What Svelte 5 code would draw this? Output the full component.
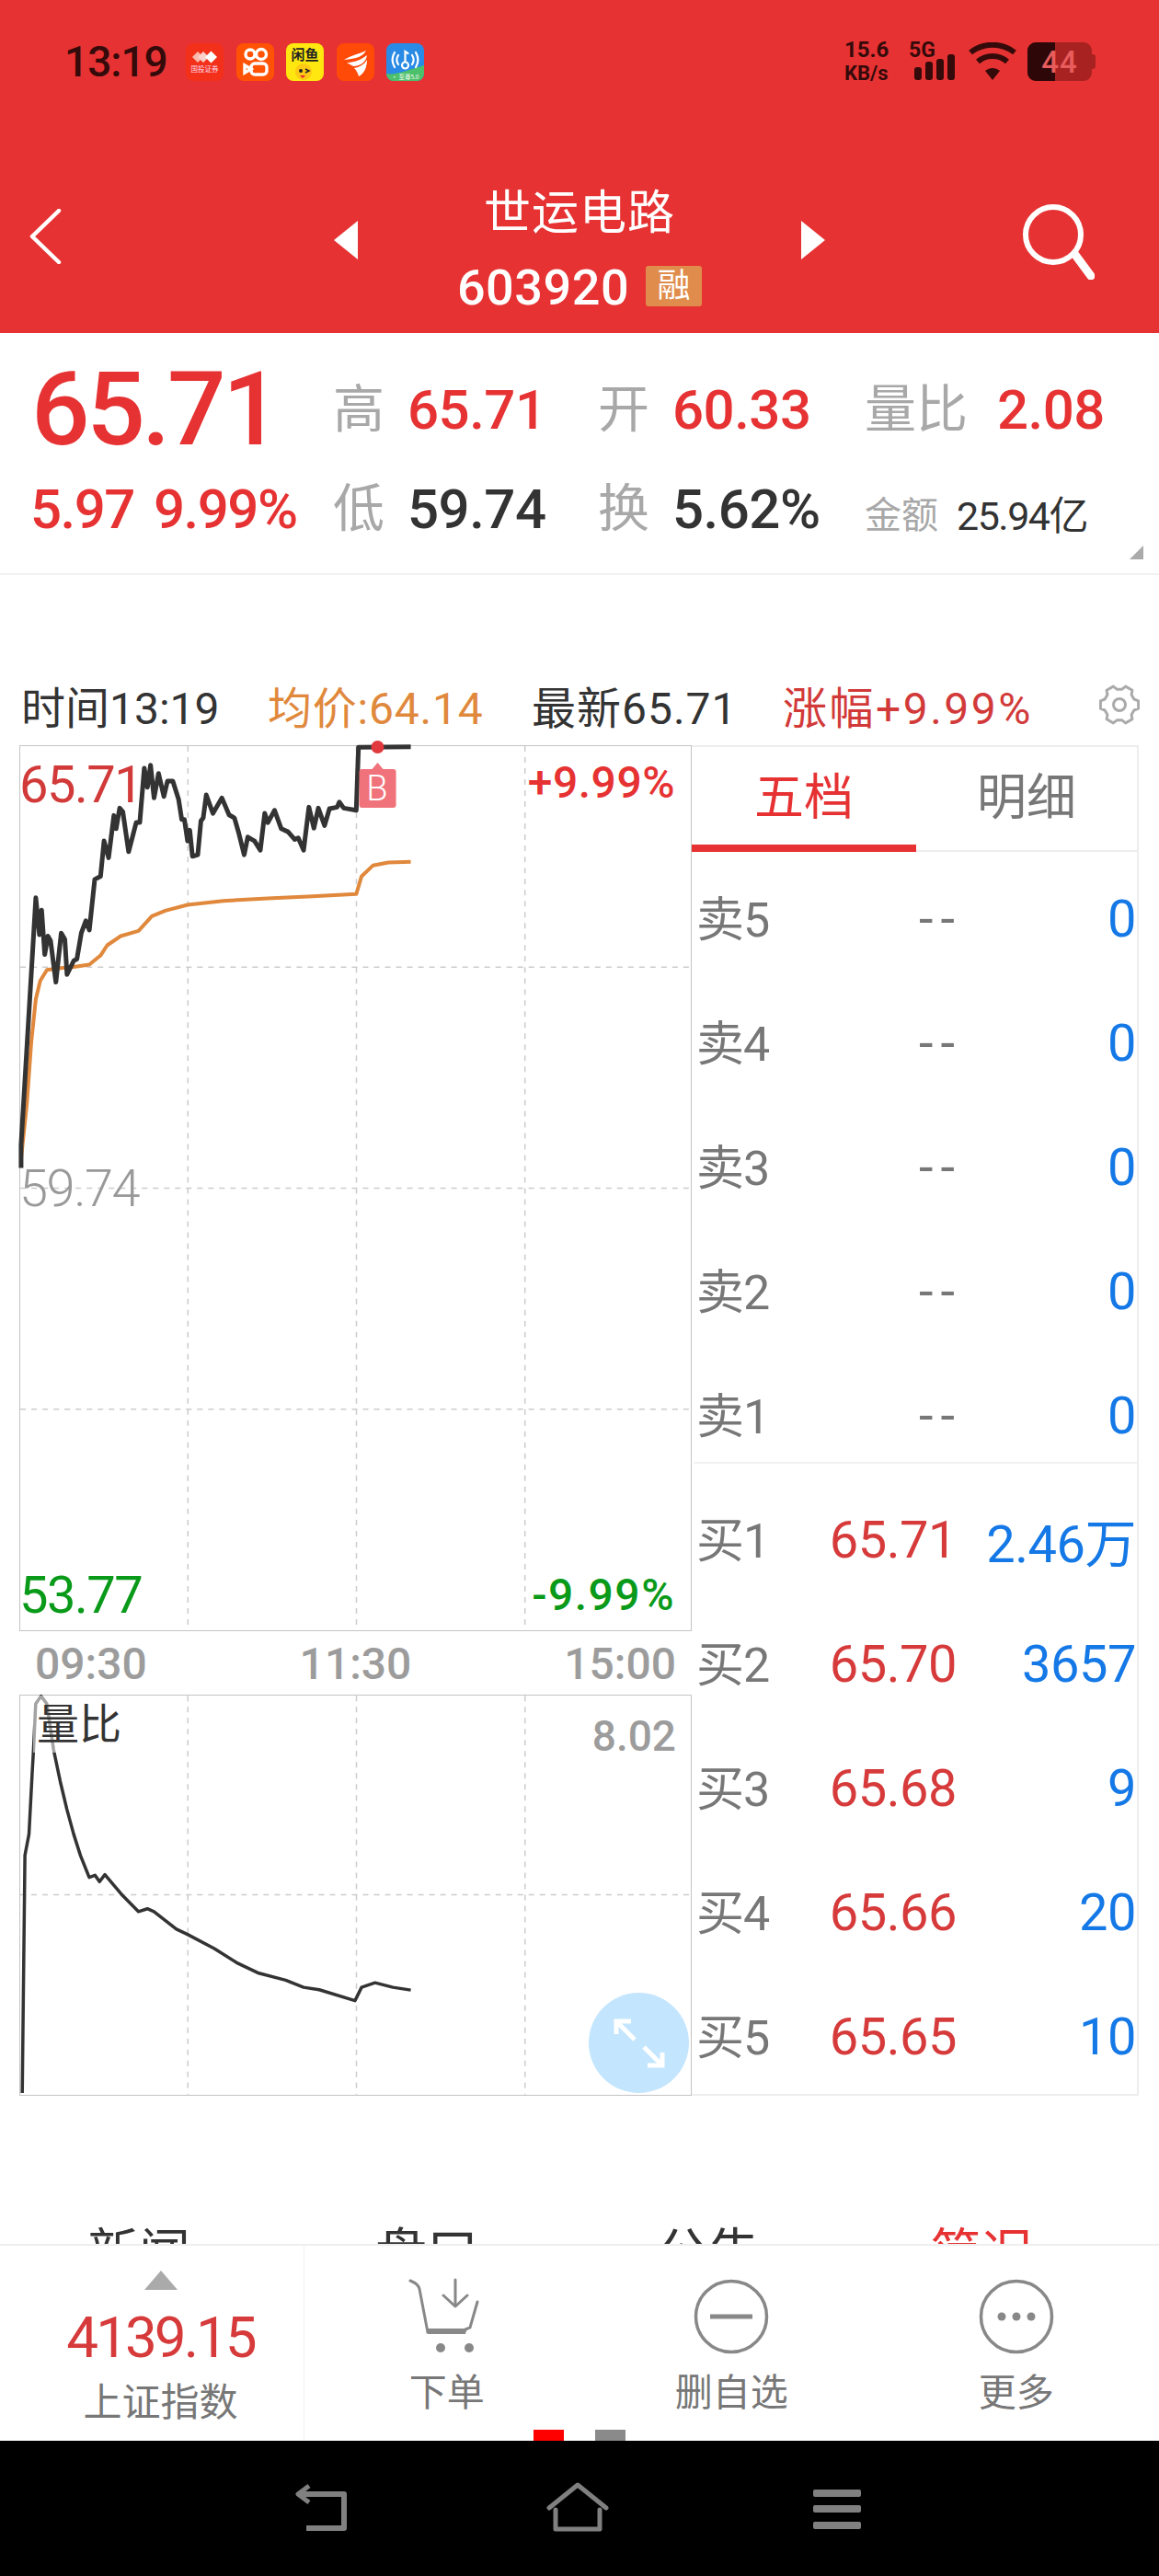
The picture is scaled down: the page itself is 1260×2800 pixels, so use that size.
<script>
  // traced from the reference, stored as full-page pixel coordinates
  const priceRaw = [[47,1410],[47,1335],[80,530],[88,650],[93,570],[100,715],[107,655],[113,670],[125,805],[137,645],[145,665],[150,780],[165,735],[172,730],[182,645],[192,605],[200,635],[212,470],[225,460],[233,345],[243,400],[255,262],[260,305],[268,238],[275,250],[288,380],[305,285],[313,285],[323,108],[330,170],[337,98],[345,205],[355,125],[367,200],[375,150],[387,150],[400,210],[407,275],[413,275],[420,345],[425,310],[431,395],[443,390],[450,280],[455,270],[462,195],[477,255],[497,205],[513,260],[525,270],[535,320],[547,390],[555,332],[570,345],[583,375],[593,255],[600,285],[615,245],[630,305],[645,315],[660,340],[668,335],[680,375],[692,235],[703,303],[713,238],[727,295],[738,240],[755,235],[760,218],[770,238],[798,245],[803,40],[920,38]];
  const avgRaw = [[47,1380],[60,1200],[70,1000],[80,860],[90,800],[105,765],[130,760],[165,755],[200,748],[225,718],[240,685],[270,655],[310,638],[340,590],[370,572],[420,553],[500,540],[600,532],[700,525],[798,518],[810,460],[835,425],[870,415],[920,413]];
  const ratioRaw = [[50,1505],[56,830],[65,770],[72,600],[75,530],[80,400],[92,378],[105,400],[120,530],[135,620],[150,700],[165,770],[180,830],[200,893],[213,887],[223,905],[235,885],[255,915],[275,945],[310,990],[330,982],[345,990],[395,1040],[420,1055],[480,1095],[530,1135],[580,1165],[640,1185],[680,1205],[715,1212],[795,1243],[810,1205],[840,1192],[880,1205],[920,1213]];

  const toPoints = (raw, ox, oy, sy, top) =>
    raw.map(([x, y]) => `${(x / 2.063 - ox).toFixed(1)},${(oy + y / sy - top).toFixed(1)}`).join(" ");

  const pricePts = toPoints(priceRaw, 22, 800, 3, 812);
  const avgPts = toPoints(avgRaw, 22, 800, 3, 812);
  const ratioPts = toPoints(ratioRaw, 22, 1700, 2.617, 1844);

  const vGrid = [182, 365, 548];

  // six lobed settings wheel
  const gearPts = [];
  for (let i = 0; i < 6; i++) {
    const a = (i * Math.PI) / 3;
    [[-0.36, 17], [-0.2, 21], [0.2, 21], [0.36, 17]].forEach(([d, r]) => {
      gearPts.push(`${(22 + r * Math.cos(a + d)).toFixed(1)},${(22 + r * Math.sin(a + d)).toFixed(1)}`);
    });
  }
  const gearPath = gearPts.join(" ");

  const sells = [5, 4, 3, 2, 1].map((n) => ({ label: "卖" + n, price: "--", vol: "0", empty: true }));
  const buys = [
    { label: "买1", price: "65.71", vol: "2.46万" },
    { label: "买2", price: "65.70", vol: "3657" },
    { label: "买3", price: "65.68", vol: "9" },
    { label: "买4", price: "65.66", vol: "20" },
    { label: "买5", price: "65.65", vol: "10" },
  ];
  const rows = [...sells, ...buys];
</script>

<div class="page">
  <header class="header">
    <div class="status">
      <span class="time">13:19</span>
      <div class="apps">
        <svg class="app" viewBox="0 0 41 41">
          <rect width="41" height="41" rx="8" fill="#f3301a" />
          <path d="M7 15l6-6 6 6-6 6z" fill="#f9b9ad" />
          <path d="M13 15l6-6 6 6-6 6z" fill="#fbd2ca" />
          <path d="M21 15l6.500-6.500 6.500 6.500-6.500 6.500z" fill="#fff" />
          <text x="20.500" y="31" text-anchor="middle" class="app-tiny">国投证券</text>
        </svg>
        <svg class="app" viewBox="0 0 41 41">
          <rect width="41" height="41" rx="8" fill="#ff5205" />
          <g fill="none" stroke="#fff" stroke-width="3.400">
            <circle cx="15" cy="12" r="5" />
            <circle cx="27" cy="12" r="5.500" />
            <rect x="16" y="22" width="17" height="12" rx="4" />
            <path d="M16 28l-7-4v8z" />
          </g>
        </svg>
        <svg class="app" viewBox="0 0 41 41">
          <rect width="41" height="41" rx="8" fill="#ffe70f" />
          <text x="20.500" y="18" text-anchor="middle" class="app-fish">闲鱼</text>
          <circle cx="19" cy="31" r="9" fill="#ffc915" />
          <circle cx="16" cy="30" r="2" fill="#222" />
          <path d="M21 28l4 2-4 2" stroke="#222" stroke-width="1.500" fill="none" />
          <path d="M15 35l3 3 3-3z" fill="#e23" />
        </svg>
        <svg class="app" viewBox="0 0 41 41">
          <rect width="41" height="41" rx="8" fill="#ff4a08" />
          <path d="M8 18C16 13 26 11 32 8 29 14 22 17 8 18z" fill="#fff" />
          <path d="M11 21c7 0 14-2 22-8-1 8-8 12-15 12z" fill="#fff" />
          <path d="M19 27c6-1 11-4 14-9 0 8-3 15-9 18-1-4-3-7-5-9z" fill="#fff" />
        </svg>
        <svg class="app" viewBox="0 0 41 41">
          <rect width="41" height="41" rx="8" fill="#2a8be6" />
          <path d="M0 33c10 2 25-4 41-9v9a8 8 0 0 1-8 8H8a8 8 0 0 1-8-8z" fill="#4cc06a" />
          <g fill="none" stroke="#fff" stroke-width="2.200" stroke-linecap="round">
            <path d="M9 10c-3 5-3 11 0 16" />
            <path d="M13 13c-2 3-2 7 0 10" />
            <path d="M32 10c3 5 3 11 0 16" />
            <path d="M28 13c2 3 2 7 0 10" />
            <circle cx="20.500" cy="24" r="3.500" />
            <path d="M20.500 20V9l3 2" />
          </g>
          <text x="20.500" y="38.500" text-anchor="middle" class="app-tiny small">· 至尊5.0</text>
        </svg>
      </div>
      <div class="sys">
        <div class="speed">
          <span>15.6</span>
          <span class="unit">KB/s</span>
        </div>
        <svg class="signal" width="50" height="42" viewBox="0 0 50 42">
          <text x="-2" y="16" class="fiveg">5G</text>
          <rect x="4" y="27" width="8" height="14" rx="3" />
          <rect x="16" y="21" width="8" height="20" rx="3" />
          <rect x="28" y="18" width="8" height="23" rx="3" />
          <rect x="40" y="13" width="8" height="28" rx="3" />
        </svg>
        <svg class="wifi" width="52" height="42" viewBox="0 0 52 42">
          <path d="M2 11C16 0 36 0 50 11" />
          <path d="M10 21C19 13 33 13 42 21" />
          <path d="M18 31l8 10 8-10c-5-4-11-4-16 0z" class="wedge" />
        </svg>
        <div class="battery">
          <span class="battery-fill"></span>
          <span class="battery-num">44</span>
          <span class="battery-cap"></span>
        </div>
      </div>
    </div>

    <div class="nav">
      <div class="nav-left">
        <svg width="36" height="60" viewBox="0 0 36 60">
          <path d="M33 2L4 30l29 28" fill="none" stroke="#fff" stroke-width="4.500" stroke-linecap="round" stroke-linejoin="round" />
        </svg>
      </div>
      <div class="nav-center">
        <svg class="tri" width="26" height="42" viewBox="0 0 26 42"><path d="M26 0v42L0 21z" fill="#fff" /></svg>
        <div class="stock">
          <div class="stock-name">世运电路</div>
          <div class="stock-code">
            <span>603920</span>
            <span class="badge">融</span>
          </div>
        </div>
        <svg class="tri" width="26" height="42" viewBox="0 0 26 42"><path d="M0 0v42l26-21z" fill="#fff" /></svg>
      </div>
      <div class="nav-right">
        <svg width="80" height="82" viewBox="0 0 80 82">
          <circle cx="35" cy="33" r="30" fill="none" stroke="#fff" stroke-width="6" />
          <path d="M59 55l17 23" stroke="#fff" stroke-width="9" stroke-linecap="round" />
        </svg>
      </div>
    </div>
  </header>

  <section class="quote">
    <div class="q-main">65.71</div>
    <div class="q-cell"><span class="q-label">高</span><span class="q-val red">65.71</span></div>
    <div class="q-cell"><span class="q-label">开</span><span class="q-val red">60.33</span></div>
    <div class="q-cell wide"><span class="q-label">量比</span><span class="q-val red">2.08</span></div>
    <div class="q-change"><span>5.97</span><span>9.99%</span></div>
    <div class="q-cell"><span class="q-label">低</span><span class="q-val">59.74</span></div>
    <div class="q-cell"><span class="q-label">换</span><span class="q-val">5.62%</span></div>
    <div class="q-cell low"><span class="q-small">金额</span><span class="q-amount">25.94亿</span></div>
    <span class="corner"></span>
  </section>

  <div class="info">
    <span class="i-time">时间13:19</span>
    <span class="i-avg">均价:64.14</span>
    <span class="i-last">最新65.71</span>
    <span class="i-rise">涨幅+9.99%</span>
    <svg class="gear" width="44" height="44" viewBox="0 0 44 44">
      <polygon points={gearPath} fill="none" stroke="#aaa" stroke-width="3" stroke-linejoin="round" />
      <circle cx="22" cy="22" r="6.500" fill="none" stroke="#aaa" stroke-width="3" />
    </svg>
  </div>

  <div class="main">
    <div class="charts">
      <div class="chart price-chart">
        <svg class="plot" viewBox="0 0 728 960">
          {#each vGrid as x}
            <line x1={x} x2={x} y1="0" y2="960" class="grid" />
          {/each}
          {#each [240, 480, 720] as y}
            <line x1="0" x2="728" y1={y} y2={y} class="grid" />
          {/each}
          <polyline points={avgPts} class="avg" />
          <polyline points={pricePts} class="price" />
          <circle cx="388" cy="1" r="7" fill="#e03a3e" />
          <path d="M368 28a3 3 0 0 1 3-3h11l6-7 6 7h11a3 3 0 0 1 3 3v36a3 3 0 0 1-3 3h-34a3 3 0 0 1-3-3z" fill="#f0727a" />
        </svg>
        <span class="b-mark">B</span>
        <span class="axis-l top">65.71</span>
        <span class="axis-r top">+9.99%</span>
        <span class="axis-l mid">59.74</span>
        <span class="axis-l bottom">53.77</span>
        <span class="axis-r bottom">-9.99%</span>
      </div>

      <div class="times">
        <span>09:30</span>
        <span>11:30</span>
        <span>15:00</span>
      </div>

      <div class="chart ratio-chart">
        <svg class="plot" viewBox="0 0 728 433">
          {#each vGrid as x}
            <line x1={x} x2={x} y1="0" y2="433" class="grid" />
          {/each}
          <line x1="0" x2="728" y1="216" y2="216" class="grid" />
          <polyline points={ratioPts} class="ratio" />
        </svg>
        <span class="ratio-label">量比</span>
        <span class="ratio-max">8.02</span>
        <div class="expand">
          <svg width="56" height="54" viewBox="0 0 56 54">
            <g fill="none" stroke="#fff" stroke-width="5">
              <path d="M3 17V3h16" />
              <path d="M3 3l20 20" />
              <path d="M53 37v14H37" />
              <path d="M53 51L33 31" />
            </g>
          </svg>
        </div>
      </div>
    </div>

    <aside class="book">
      <div class="tabs">
        <span class="tab active">五档</span>
        <span class="tab">明细</span>
      </div>
      <div class="rows">
        {#each rows as r}
          <div class="row">
            <span class="r-label">{r.label}</span>
            <span class="r-price" class:dash={r.empty}>{r.price}</span>
            <span class="r-vol">{r.vol}</span>
          </div>
        {/each}
        <span class="sep"></span>
      </div>
    </aside>
  </div>

  <div class="news-tabs">
    <span>新闻</span>
    <span>盘口</span>
    <span>公告</span>
    <span class="on">简况</span>
  </div>

  <footer class="toolbar">
    <div class="index">
      <span class="index-up"></span>
      <span class="index-val">4139.15</span>
      <span class="index-name">上证指数</span>
    </div>
    <div class="actions">
      <div class="action">
        <svg class="cart" width="90" height="84" viewBox="0 0 90 84">
          <g fill="none" stroke="#888" stroke-width="3">
            <path d="M2 3c5 2 9 4 10 9l9 47h40l1-3 5-2 8-28" stroke-linecap="round" />
            <path d="M21 58h41" stroke-width="6" />
            <path d="M51 2v28" stroke-linecap="round" />
            <path d="M38 19l13 12 13-12" stroke-linecap="round" stroke-linejoin="round" />
          </g>
          <circle cx="35" cy="76" r="5" fill="#888" />
          <circle cx="66" cy="76" r="5" fill="#888" />
        </svg>
        <span>下单</span>
      </div>
      <div class="action">
        <svg width="84" height="84" viewBox="0 0 84 84">
          <circle cx="42" cy="42" r="38.500" fill="none" stroke="#888" stroke-width="3.500" />
          <path d="M19 42h46" stroke="#888" stroke-width="5" />
        </svg>
        <span>删自选</span>
      </div>
      <div class="action">
        <svg width="84" height="84" viewBox="0 0 84 84">
          <circle cx="42" cy="42" r="38.500" fill="none" stroke="#888" stroke-width="3.500" />
          <circle cx="26" cy="42" r="4.500" fill="#888" />
          <circle cx="42" cy="42" r="4.500" fill="#888" />
          <circle cx="58" cy="42" r="4.500" fill="#888" />
        </svg>
        <span>更多</span>
      </div>
    </div>
    <div class="pager">
      <span class="dot on"></span>
      <span class="dot"></span>
    </div>
  </footer>

  <nav class="sysnav">
    <svg width="60" height="54" viewBox="0 0 60 54">
      <g fill="none" stroke="#808080" stroke-width="6" stroke-linejoin="round">
        <path d="M6 13h49v37H14" />
        <path d="M17 4L5 13l12 9" stroke-width="5" />
      </g>
    </svg>
    <svg width="68" height="54" viewBox="0 0 68 54">
      <g fill="none" stroke="#808080" stroke-width="5" stroke-linejoin="round" stroke-linecap="round">
        <path d="M3 28L34 3l31 25" />
        <path d="M10 30v21h48V30" />
      </g>
    </svg>
    <svg width="54" height="44" viewBox="0 0 54 44">
      <rect x="1" y="0" width="52" height="8" rx="2" fill="#808080" />
      <rect x="1" y="17" width="52" height="8" rx="2" fill="#808080" />
      <rect x="1" y="35" width="52" height="8" rx="2" fill="#808080" />
    </svg>
  </nav>
</div>

<style>
  :global(body) {
    margin: 0;
    background: #fff;
  }

  .page {
    width: 1260px;
    height: 2800px;
    overflow: hidden;
    display: flex;
    flex-direction: column;
    background: #fff;
    color: #333;
    font-family: Roboto, "Noto Sans CJK SC", sans-serif;
  }

  /* header */
  .header {
    height: 362px;
    flex: none;
    background: #e63232;
    box-sizing: border-box;
    padding-top: 46px;
  }

  .status {
    height: 42px;
    display: flex;
    align-items: center;
    padding-left: 70px;
    color: #350a0a;
  }

  .time {
    font-size: 46px;
    font-weight: 500;
    width: 132px;
    letter-spacing: -1px;
  }

  .apps {
    display: flex;
    gap: 13.5px;
  }

  .app {
    width: 41px;
    height: 41px;
  }

  .app-tiny {
    font-size: 7.5px;
    fill: #fde;
    font-family: "Noto Sans CJK SC", sans-serif;
  }

  .app-tiny.small {
    font-size: 6.5px;
    fill: #fff;
  }

  .app-fish {
    font-size: 15px;
    font-weight: 700;
    fill: #222;
    font-family: "Noto Sans CJK SC", sans-serif;
  }

  .sys {
    margin-left: auto;
    display: flex;
    align-items: center;
    padding-right: 73px;
  }

  .speed {
    width: 68px;
    display: flex;
    flex-direction: column;
    font-size: 24px;
    font-weight: 700;
    line-height: 25px;
  }

  .speed .unit {
    font-size: 22px;
  }

  .signal {
    fill: #350a0a;
    margin-right: 13px;
    margin-left: 4px;
    overflow: visible;
  }

  .fiveg {
    font-size: 23px;
    font-weight: 700;
    font-family: Roboto, sans-serif;
  }

  .wifi {
    margin-right: 12px;
  }

  .wifi path {
    fill: none;
    stroke: #350a0a;
    stroke-width: 6;
  }

  .wifi .wedge {
    fill: #350a0a;
    stroke: none;
  }

  .battery {
    position: relative;
    width: 70px;
    height: 42px;
    border-radius: 9px;
    background: #a82222;
    display: flex;
    align-items: center;
    justify-content: center;
  }

  .battery-fill {
    position: absolute;
    left: 0;
    top: 0;
    bottom: 0;
    width: 30px;
    border-radius: 9px 0 0 9px;
    background: #2e0808;
  }

  .battery-num {
    position: relative;
    font-size: 33px;
    font-weight: 500;
    letter-spacing: 1px;
    color: #e85c5c;
  }

  .battery-cap {
    position: absolute;
    right: -4px;
    top: 13px;
    width: 4px;
    height: 16px;
    border-radius: 0 3px 3px 0;
    background: #a82222;
  }

  .nav {
    display: grid;
    grid-template-columns: 1fr 534px 1fr;
    margin-top: 113px;
  }

  .nav-left {
    padding: 26px 0 0 31px;
  }

  .nav-center {
    display: flex;
    justify-content: space-between;
    align-items: flex-start;
  }

  .tri {
    margin-top: 39px;
  }

  .stock {
    text-align: center;
    color: #fff;
  }

  .stock-name {
    font-size: 51px;
    line-height: 62px;
    letter-spacing: 1px;
  }

  .stock-code {
    margin-top: 14px;
    height: 70px;
    display: flex;
    align-items: center;
    gap: 18px;
    font-size: 54px;
    font-weight: 500;
    letter-spacing: 0.5px;
  }

  .badge {
    width: 61px;
    height: 44px;
    margin-top: -3px;
    border-radius: 3px;
    background: #e08c4c;
    font-size: 36px;
    line-height: 44px;
    font-weight: 400;
    text-align: center;
    letter-spacing: 0;
  }

  .nav-right {
    display: flex;
    justify-content: flex-end;
    padding: 21px 70px 0 0;
  }

  /* quote */
  .quote {
    position: relative;
    height: 263px;
    flex: none;
    box-sizing: border-box;
    padding: 29px 0 0 36px;
    border-bottom: 2px solid #f2f2f2;
    display: grid;
    grid-template-columns: 326px 288px 290px 1fr;
    grid-auto-rows: 108px;
  }

  .q-main {
    font-size: 112px;
    font-weight: 500;
    color: #e63232;
    letter-spacing: -3.5px;
    line-height: 108px;
    margin-left: -2px;
  }

  .q-cell {
    display: flex;
    align-items: center;
    gap: 25px;
  }

  .q-cell.wide {
    gap: 32px;
  }

  .q-label {
    font-size: 56px;
    color: #a8a8a8;
    line-height: 1;
  }

  .q-val {
    font-size: 60px;
    font-weight: 500;
    letter-spacing: -0.5px;
    color: #333;
  }

  .red {
    color: #e63232;
  }

  .q-change {
    display: flex;
    align-items: center;
    gap: 21px;
    margin-left: -3px;
    font-size: 60px;
    font-weight: 500;
    color: #e63232;
    letter-spacing: -1.5px;
  }

  .q-cell.low {
    padding-top: 8px;
    box-sizing: border-box;
    gap: 20px;
  }

  .q-small {
    font-size: 40px;
    color: #a8a8a8;
  }

  .q-amount {
    font-size: 43px;
    letter-spacing: -1.5px;
    color: #333;
  }

  .corner {
    position: absolute;
    right: 17px;
    bottom: 15px;
    width: 0;
    height: 0;
    border-left: 15px solid transparent;
    border-bottom: 15px solid #aaa;
  }

  /* info row */
  .info {
    height: 86px;
    margin-top: 99px;
    flex: none;
    box-sizing: border-box;
    padding: 0 0 2px 23px;
    display: flex;
    align-items: center;
    font-size: 48px;
  }

  .i-time {
    width: 268px;
  }

  .i-avg {
    width: 287px;
    color: #e0883c;
    letter-spacing: 0.8px;
  }

  .i-last {
    width: 273px;
    letter-spacing: 1px;
  }

  .i-rise {
    color: #d23a3a;
    letter-spacing: 2.5px;
  }

  .gear {
    margin-left: auto;
    margin-right: 21px;
  }

  /* charts */
  .main {
    display: flex;
    flex: none;
    height: 1468px;
  }

  .charts {
    width: 752px;
    flex: none;
    padding-left: 21px;
    box-sizing: border-box;
  }

  .chart {
    position: relative;
    width: 731px;
    box-sizing: border-box;
    border: 1.5px solid #c4c4c4;
  }

  .price-chart {
    height: 963px;
  }

  .ratio-chart {
    height: 436px;
  }

  .plot {
    position: absolute;
    inset: 0;
    width: 100%;
    height: 100%;
    overflow: visible;
  }

  .grid {
    stroke: #ccc;
    stroke-width: 1.5;
    stroke-dasharray: 6 6;
  }

  .price {
    fill: none;
    stroke: #333;
    stroke-width: 5;
    stroke-linejoin: round;
  }

  .avg {
    fill: none;
    stroke: #e0883c;
    stroke-width: 4;
    stroke-linejoin: round;
  }

  .ratio {
    fill: none;
    stroke: #333;
    stroke-width: 3.5;
    stroke-linejoin: round;
  }

  .b-mark {
    position: absolute;
    left: 369px;
    top: 22px;
    width: 38px;
    text-align: center;
    font-size: 38px;
    line-height: 48px;
    font-weight: 300;
    color: #fff;
  }

  .axis-l,
  .axis-r {
    position: absolute;
    font-size: 56px;
    line-height: 60px;
    letter-spacing: -1.5px;
  }

  .axis-l {
    left: -1px;
    font-weight: 300;
  }

  .axis-r {
    right: 17px;
    font-size: 48px;
    letter-spacing: 0.5px;
    font-weight: 500;
  }

  .axis-l.top {
    top: 12px;
    color: #d23a3a;
    font-weight: 400;
  }

  .axis-r.top {
    top: 10px;
    color: #e63232;
  }

  .axis-l.mid {
    top: 451px;
    color: #999;
  }

  .axis-l.bottom {
    bottom: 8px;
    color: #0a9a1a;
    font-weight: 400;
  }

  .axis-r.bottom {
    bottom: 8px;
    color: #0a9a1a;
    letter-spacing: 1.5px;
  }

  .times {
    height: 69px;
    display: flex;
    justify-content: space-between;
    align-items: center;
    padding: 2px 17px 0 17px;
    font-size: 48px;
    font-weight: 500;
    color: #9c9c9c;
    width: 731px;
    box-sizing: border-box;
  }

  .ratio-label {
    position: absolute;
    left: 14px;
    top: 0;
    padding: 0 4px;
    font-size: 46px;
    line-height: 62px;
    color: #333;
    background: rgba(255, 255, 255, 0.55);
  }

  .ratio-max {
    position: absolute;
    right: 16px;
    top: 16px;
    font-size: 46px;
    line-height: 56px;
    font-weight: 500;
    color: #9c9c9c;
  }

  .expand {
    position: absolute;
    left: 618px;
    top: 323px;
    width: 109px;
    height: 109px;
    border-radius: 50%;
    background: #c3e5fd;
    display: flex;
    align-items: center;
    justify-content: center;
  }

  /* order book */
  .book {
    width: 486px;
    height: 1468px;
    box-sizing: border-box;
    border: solid #ededed;
    border-width: 2px 2px 2px 0;
  }

  .tabs {
    display: grid;
    grid-template-columns: 244px 1fr;
    height: 114px;
    box-sizing: border-box;
    border-bottom: 2px solid #ededed;
  }

  .tab {
    font-size: 54px;
    line-height: 112px;
    text-align: center;
    color: #777;
  }

  .tab.active {
    height: 114px;
    box-sizing: border-box;
    color: #e63232;
    border-bottom: 8px solid #e63232;
  }

  .rows {
    position: relative;
    padding-top: 5px;
  }

  .row {
    height: 135px;
    display: grid;
    grid-template-columns: 115px 168px 1fr;
    align-items: center;
    padding: 0 1px 0 5px;
  }

  .r-label {
    font-size: 52px;
    color: #777;
    letter-spacing: -1px;
    margin-top: -6px;
  }

  .r-price {
    font-size: 56px;
    color: #d63a3a;
    text-align: right;
    letter-spacing: -0.5px;
  }

  .r-price.dash {
    color: #777;
    letter-spacing: 8px;
    margin-right: -6px;
  }

  .r-vol {
    font-size: 56px;
    color: #1478e6;
    text-align: right;
    letter-spacing: -0.5px;
  }

  .sep {
    position: absolute;
    left: 2px;
    right: 0;
    top: 663px;
    height: 2px;
    background: #f2f2f2;
  }

  /* bottom tabs, cut off by the toolbar */
  .news-tabs {
    height: 161px;
    flex: none;
    overflow: hidden;
    box-sizing: border-box;
    padding: 137px 0 0 95px;
    display: grid;
    grid-template-columns: 313px 306px 297px 1fr;
    font-size: 56px;
    line-height: 68px;
    color: #333;
  }

  .news-tabs .on {
    color: #e63232;
  }

  /* toolbar */
  .toolbar {
    position: relative;
    height: 214px;
    flex: none;
    box-sizing: border-box;
    border-top: 2px solid #eee;
    display: flex;
    background: #fff;
  }

  .index {
    width: 331px;
    box-sizing: border-box;
    border-right: 1px solid #f0f0f0;
    display: flex;
    flex-direction: column;
    align-items: center;
    padding: 27px 0 0 19px;
  }

  .index-up {
    width: 0;
    height: 0;
    border: solid transparent;
    border-width: 0 18px 21px;
    border-bottom-color: #aaa;
  }

  .index-val {
    margin-top: 17px;
    font-size: 62px;
    line-height: 70px;
    color: #d63a3a;
    letter-spacing: -3px;
  }

  .index-name {
    margin-top: 8px;
    font-size: 42px;
    line-height: 56px;
    color: #777;
  }

  .actions {
    display: grid;
    grid-template-columns: repeat(3, 309.5px);
  }

  .action {
    display: flex;
    flex-direction: column;
    align-items: center;
    padding-top: 35px;
    font-size: 41px;
    line-height: 50px;
    color: #777;
  }

  .action span {
    margin-top: 16px;
  }

  .cart {
    margin-left: 6px;
  }

  .pager {
    position: absolute;
    left: 580px;
    bottom: 0;
    display: flex;
    gap: 34px;
  }

  .dot {
    width: 33px;
    height: 12px;
    background: #8a8a8a;
  }

  .dot.on {
    background: #f00;
  }

  .sysnav {
    flex: 1;
    background: #000;
    display: flex;
    justify-content: center;
    box-sizing: border-box;
    padding: 45px 0 0 14px;
  }

  .sysnav svg:nth-child(1) {
    margin-left: -18px;
  }

  .sysnav svg:nth-child(2) {
    margin: 0 221px 0 215px;
  }

  .sysnav svg:nth-child(3) {
    margin-top: 8px;
  }
</style>
